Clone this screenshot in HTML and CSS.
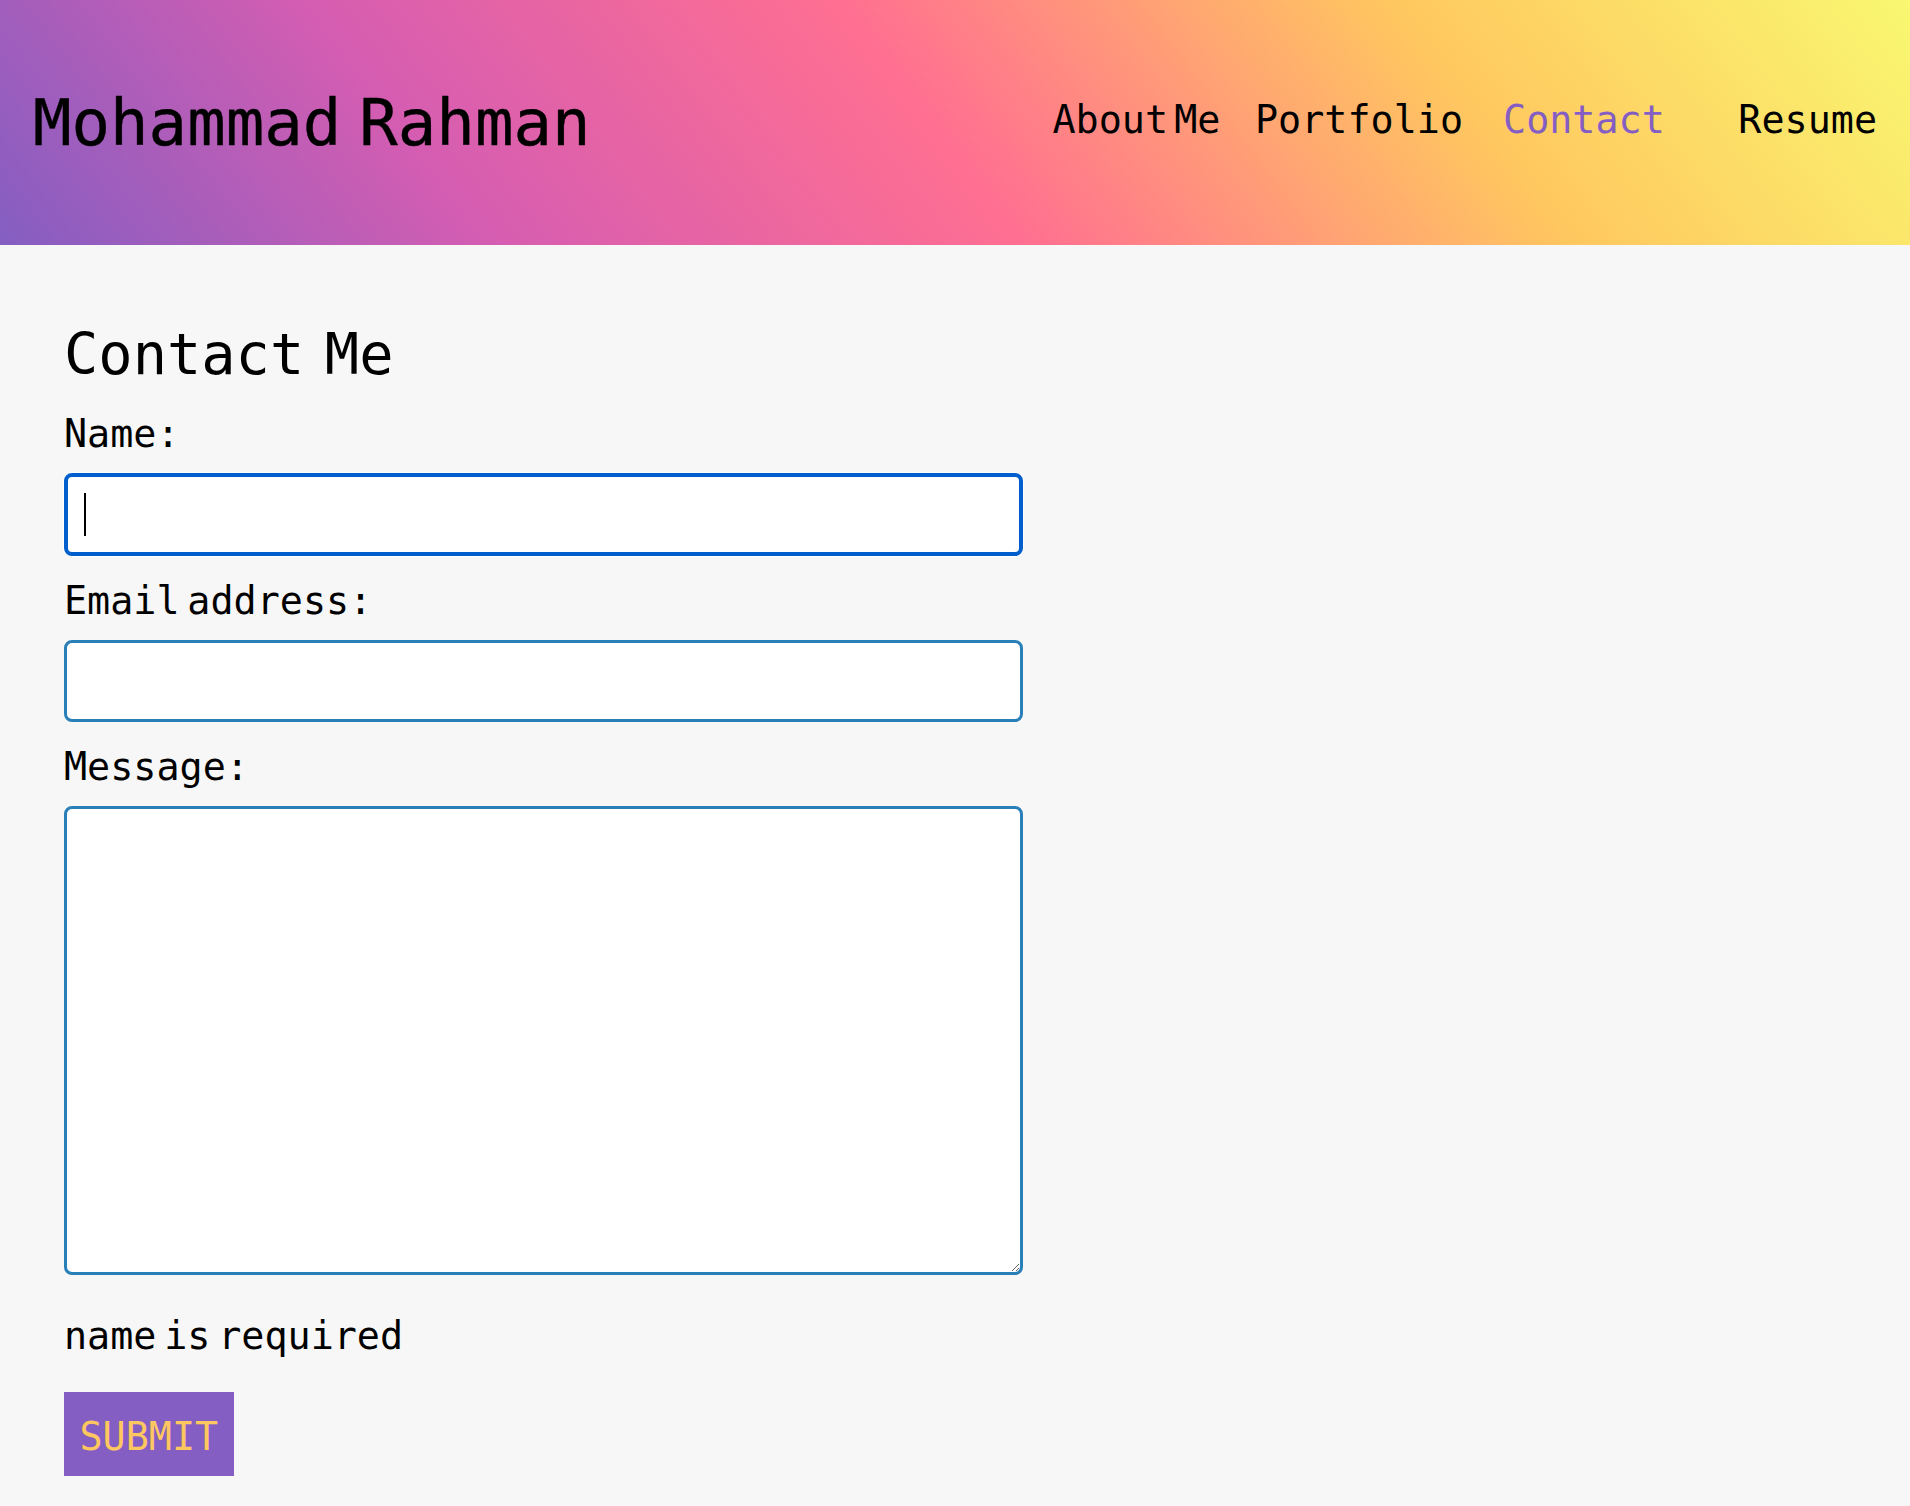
FILE: index.html
```html
<!DOCTYPE html>
<html lang="en">
<head>
<meta charset="utf-8">
<title>Mohammad Rahman - Contact</title>
<link rel="stylesheet" href="styles.css">
</head>
<body>
<header class="site-header">
  <h1 class="brand">Mohammad Rahman</h1>
  <nav class="nav">
    <a class="nav-link" href="#about">About Me</a>
    <a class="nav-link nav-portfolio" href="#portfolio">Portfolio</a>
    <a class="nav-link nav-active" href="#contact">Contact</a>
    <a class="nav-link nav-resume" href="#resume">Resume</a>
  </nav>
</header>
<main class="content">
  <section class="contact">
    <h2 class="contact-title">Contact Me</h2>
    <form class="contact-form">
      <label class="field-label" for="name">Name:</label>
      <div class="field-wrap">
        <input class="field field-focused" id="name" type="text" name="name">
        <span class="caret"></span>
      </div>
      <label class="field-label" for="email">Email address:</label>
      <input class="field" id="email" type="email" name="email">
      <label class="field-label" for="message">Message:</label>
      <textarea class="field field-area" id="message" name="message"></textarea>
      <p class="error-text">name is required</p>
      <button class="submit" type="button">SUBMIT</button>
    </form>
  </section>
</main>
</body>
</html>
```
FILE: styles.css
```css
html, body {
  margin: 0;
  padding: 0;
}

body {
  background: #f7f7f7;
  color: #000;
  font-family: "DejaVu Sans Mono", "Liberation Mono", monospace;
  min-height: 1506px;
}

.site-header {
  height: 245px;
  box-sizing: border-box;
  display: flex;
  align-items: center;
  justify-content: space-between;
  padding: 0 33px 0 33px;
  background: linear-gradient(53deg, #845ec2 0%, #d65db1 24%, #ff6f91 49%, #ffc75f 75%, #f9f871 100%);
}

.brand {
  margin: 0;
  font-size: 64px;
  font-weight: normal;
  word-spacing: -0.32em;
  line-height: normal;
  -webkit-text-stroke: 0.4px #000;
}

.nav {
  display: flex;
  padding-bottom: 6px;
}

.nav-link {
  color: #000;
  text-decoration: none;
  font-size: 38.4px;
  word-spacing: -0.44em;
}

.nav-portfolio {
  margin-left: 34.5px;
}

.nav-active {
  color: #845ec2;
  margin-left: 40px;
}

.nav-resume {
  margin-left: 73.5px;
}

.content {
  padding: 76px 64px 30px;
}

.contact-title {
  margin: 0 0 24px;
  font-size: 57px;
  font-weight: normal;
  line-height: normal;
  word-spacing: -0.24em;
}

.contact-form {
  width: 959px;
  display: flex;
  flex-direction: column;
}

.field-label {
  font-size: 38.4px;
  line-height: normal;
  word-spacing: -0.4em;
  margin-bottom: 17px;
}

.field-wrap {
  position: relative;
  margin-bottom: 22px;
}

.field {
  box-sizing: border-box;
  width: 100%;
  height: 82px;
  border: 3px solid #2980b9;
  border-radius: 8px;
  background: #fff;
  padding: 0 17px;
  font-family: "DejaVu Sans Mono", monospace;
  font-size: 38px;
  outline: none;
  margin: 0 0 22px;
  display: block;
}

.field-wrap .field {
  margin: 0;
  height: 83px;
}

.field-focused {
  border: 4px solid #005fcc;
  box-shadow: 0 0 0 1px #ffffff;
}

.caret {
  position: absolute;
  left: 20px;
  top: 20px;
  width: 2px;
  height: 43px;
  background: #000;
}

.field-area {
  height: 469px;
  margin-bottom: 38px;
  padding: 10px 17px;
  resize: both;
}

.error-text {
  margin: 0 0 34px;
  font-size: 38.4px;
  line-height: normal;
  word-spacing: -0.4em;
}

.submit {
  align-self: flex-start;
  background: #845ec2;
  color: #ffc75f;
  border: none;
  border-radius: 0;
  font-family: "DejaVu Sans Mono", monospace;
  font-size: 38.4px;
  line-height: normal;
  padding: 22px 15.5px 17px;
  cursor: pointer;
}
```
